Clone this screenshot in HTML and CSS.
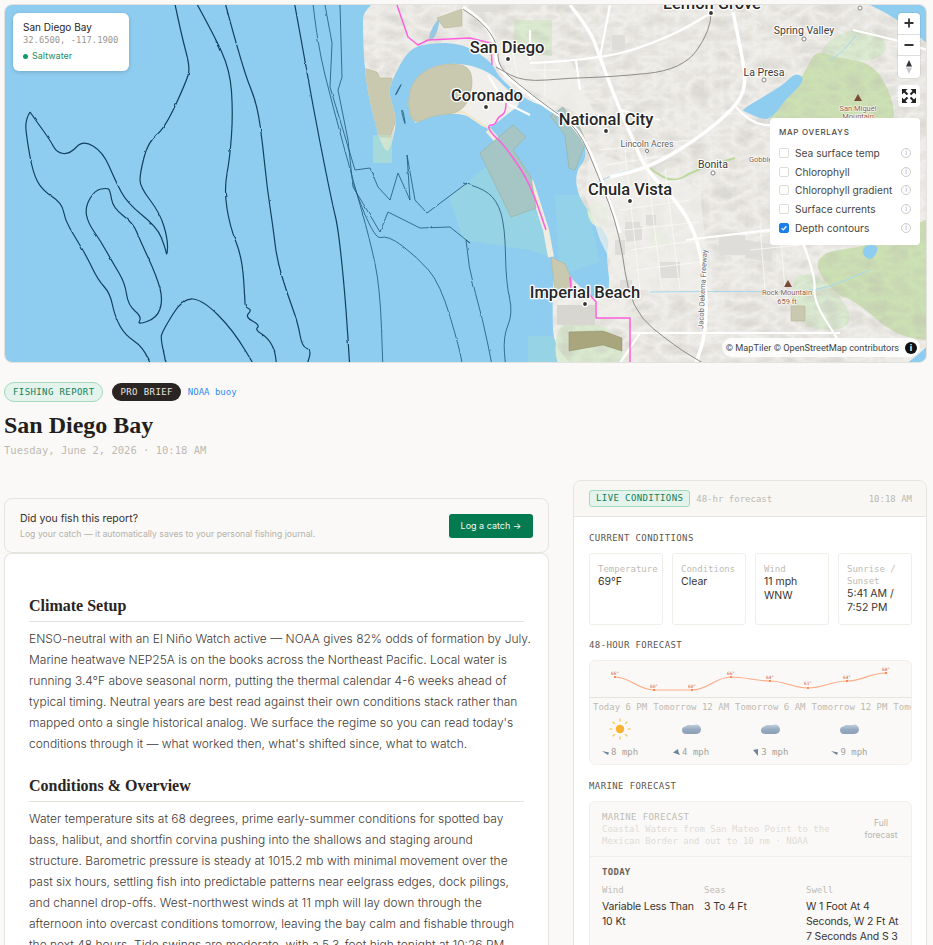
FILE: index.html
```html
<!DOCTYPE html>
<html lang="en">
<head>
    <meta charset="UTF-8">
    <meta name="viewport" content="width=device-width, initial-scale=1.0">
    <title>San Diego Bay - Fishing Report</title>
    <link rel="stylesheet" href="styles.css">
</head>
<body>
<div class="page">

    <!-- map -->
    <div class="map">
        <svg class="map-art" viewBox="5 5 921 357" preserveAspectRatio="none">
            <defs>
                <filter id="relief" x="0" y="0" width="100%" height="100%">
                    <feTurbulence type="turbulence" baseFrequency="0.045 0.07" numOctaves="4" seed="11"/>
                    <feColorMatrix type="matrix" values="0 0 0 0 0.50  0 0 0 0 0.48  0 0 0 0 0.44  1.5 0 0 0 -0.12"/>
                </filter>
                <filter id="rough" x="-5%" y="-5%" width="110%" height="110%">
                    <feTurbulence type="fractalNoise" baseFrequency="0.09" numOctaves="2" seed="3" result="n"/>
                    <feDisplacementMap in="SourceGraphic" in2="n" scale="2" xChannelSelector="R" yChannelSelector="G"/>
                </filter>
                <clipPath id="landclip">
                    <path class="smooth" d="M363,-30 L363,70 L377,133 L387,155 L393,140 L397,118 L388,93 L393,78 L408,50 L427,43 L463,43 L493,63 L498,77 L530,103 L553,107 L580,128 L588,157 L575,172 L578,197 L596,220 L610,240 L606,253 L611,293 L596,302 L570,277 L551,257 L555,400 L980,400 L980,-30 Z"/>
                </clipPath>
            </defs>

            <rect class="water" x="0" y="0" width="933" height="370"/>

            <!-- teal protected areas -->
            <path class="teal" d="M449,197 L493,161 L540,217 L551,257 L530,250 L463,240 Z"/>
            <path class="teal" d="M528,336 L556,336 L556,363 L528,363 Z"/>
            <path class="teal-soft" d="M555,195 L585,195 L600,262 L560,275 Z"/>

            <!-- land -->
            <path class="land smooth" d="M363,-30 L363,70 L377,133 L387,155 L393,140 L397,118 L388,93 L393,78 L408,50 L427,43 L463,43 L493,63 L498,77 L530,103 L553,107 L580,128 L588,157 L575,172 L578,197 L596,220 L610,240 L606,253 L611,293 L596,302 L570,277 L551,257 L555,400 L980,400 L980,-30 Z"/>
            <path class="land smooth" d="M413,125 L407,103 L413,80 L433,65 L463,63 L490,72 L506,88 L523,103 L506,115 L488,130 L476,122 L463,113 L433,115 Z"/>
            <path class="strand" d="M488,130 L506,150 L531,183 L546,230 L551,257"/>
            <path class="beach" d="M415,122 L433,114 L463,112 L488,128 L530,181 L545,228"/>
            <path class="water smooth" d="M428,40 L432,27 L440,17 L438,30 L433,40 Z"/>

            <!-- parks, forest -->
            <path class="forest smooth" d="M790,95 L806,70 L816,50 L836,57 L873,63 L893,97 L895,130 L765,130 L775,108 Z"/>
            <path class="forest-pale smooth" d="M816,50 L856,24 L893,44 L873,63 L836,57 Z"/>
            <path class="forest smooth" d="M960,200 L880,245 L810,253 L830,293 L855,300 L900,340 L960,340 Z"/>
            <path class="forest-pale smooth" d="M790,270 L830,280 L860,330 L795,330 Z"/>
            <path class="forest-pale" d="M514,20 L552,20 L552,56 L514,56 Z"/>
            <path class="forest-pale" d="M651,230 L668,233 L670,247 L650,246 Z"/>
            <path class="forest-pale smooth" d="M555,320 L600,322 L625,345 L620,380 L556,380 Z"/>
            <path class="forest-pale smooth" d="M585,205 L603,200 L610,225 L592,228 Z"/>

            <!-- hill shading -->
            <g clip-path="url(#landclip)">
                <rect filter="url(#relief)" class="relief" x="363" y="4" width="564" height="360"/>
            </g>

            <!-- flat town areas have no shading -->
            <path class="flat" d="M496,45 L570,60 L600,125 L560,105 L510,80 Z"/>
            <path class="flat" d="M590,150 L700,190 L710,290 L625,290 L600,240 L585,195 Z"/>
            <path class="flat" d="M557,300 L625,300 L625,318 L557,318 Z"/>
            <path class="flat" d="M470,70 L520,100 L500,118 L475,118 Z"/>

            <!-- urban blocks -->
            <path class="block" d="M470,5 L500,5 L500,12 L470,12 Z M612,35 L625,35 L625,50 L612,50 Z M625,222 L640,222 L640,236 L625,236 Z M615,240 L625,240 L625,255 L615,255 Z M626,228 L642,226 L642,240 L626,242 Z M660,262 L680,262 L680,278 L660,278 Z M719,232 L745,232 L745,255 L719,255 Z M745,240 L772,244 L772,262 L745,258 Z M646,215 L656,215 L656,225 L646,225 Z M620,280 L632,280 L632,292 L620,292 Z"/>
            <path class="block-dark" d="M557,305 L595,305 L595,325 L557,325 Z"/>

            <!-- olive military land -->
            <path class="olive smooth" d="M413,125 L407,103 L413,80 L433,65 L468,63 L474,85 L463,113 L433,115 Z"/>
            <g clip-path="url(#landclip)">
                <path class="olive" d="M363,68 L377,72 L380,78 L392,78 L397,118 L390,137 L380,137 L370,107 Z"/>
            </g>
            <path class="olive" d="M437,18 L462,9 L462,26 L444,28 Z"/>
            <path class="olive-water" d="M480,153 L513,125 L526,137 L513,150 L531,177 L536,208 L511,217 Z"/>
            <path class="olive-water" d="M550,116 L563,107 L580,128 L586,142 L575,170 L569,168 L565,135 Z"/>
            <path class="olive" d="M551,257 L565,264 L572,280 L570,292 L555,292 Z"/>
            <path class="olive-dark" d="M569,332 L603,331 L622,338 L622,351 L603,345 L569,351 Z"/>
            <path class="olive" d="M791,306 L805,306 L805,321 L791,321 Z"/>
            <rect class="tip" x="373" y="135" width="19" height="28"/>

            <!-- reservoirs, rivers -->
            <path class="water smooth" d="M741,110 L763,97 L783,85 L796,72 L806,80 L785,100 L773,117 L763,120 L746,112 Z"/>
            <path class="water smooth" d="M863,245 L880,245 L873,260 L863,257 Z"/>
            <path class="river smooth" d="M593,185 L610,175 L640,168 M650,292 L745,291 L815,293 L870,270 M856,35 L845,50 L830,60"/>
            <path class="creek smooth" d="M650,168 L670,185 L695,170 L735,158"/>

            <!-- roads -->
            <path class="road-big smooth" d="M463,7 L483,20 L496,43 L496,67 L520,87 L546,107 L578,127 L598,170 L620,233"/>
            <path class="road-big smooth" d="M570,5 L590,30 L600,57 L613,93 L633,140 L646,170 L676,200 L696,233 L706,283 L706,333 L696,363"/>
            <path class="road-big smooth" d="M733,12 L743,60 L746,85 L736,107 L696,140 L650,167 L610,177"/>
            <path class="road smooth" d="M530,63 L603,60 L670,37 L711,13"/>
            <path class="road smooth" d="M736,107 L753,127 L790,123"/>
            <path class="road smooth" d="M803,243 L816,277 L813,300 L840,343"/>
            <path class="road" d="M630,333 L840,333"/>
            <path class="road smooth" d="M853,30 L897,40 L927,50"/>
            <path class="road" d="M610,5 L600,57 M530,30 L530,60 M576,60 L580,90 M620,110 L660,120 M686,240 L770,230 M640,333 L620,363 M506,103 L530,115 M488,75 L500,95"/>
            <path class="street" d="M600,150 L690,140 M605,165 L670,155 M612,190 L680,180 M620,210 L690,200 M625,230 L700,222 M630,250 L700,240 M635,270 L700,262 M625,150 L640,290 M645,150 L662,290 M665,170 L680,290 M740,235 L800,228 M750,250 L800,245 M760,225 L765,290 M780,225 L785,290 M510,40 L520,85 M530,70 L560,70 M545,60 L545,95"/>

            <!-- rail -->
            <path class="rail smooth" d="M463,9 L483,22 L498,45 L498,67 L522,87 L548,107 L578,128 L598,175 L620,233 L630,310 L676,347 L703,363"/>
            <path class="rail smooth" d="M711,13 L711,30 L683,70 L610,77 L570,78 L523,82 L496,67"/>

            <!-- county line -->
            <path class="pink" d="M397,5 L408,37 L418,45 L428,40 L470,38 L486,42 L491,43 L492,65"/>
            <path class="pink smooth" d="M506,103 L506,113 L498,117 L495,125 L488,125 L490,132 L506,147 L530,183 L546,230"/>
            <path class="pink" d="M570,277 L571,288 M590,295 L596,302 L596,318 L630,318 L630,363"/>

            <!-- depth contours -->
            <g filter="url(#rough)">
                <path class="contour smooth" d="M30,112 L25,120 L27,140 L33,173 L42,190 L62,203 L65,220 L75,237 L87,257 L98,280 L110,293 L115,317 L125,335 L143,347 L153,370"/>
                <path class="contour smooth" d="M30,112 L37,122 L50,140 L57,153 L70,154 L83,140 L103,152 L115,180 L127,203 L157,227 L165,247 L167,257 L168,240 L160,213 L140,187 L140,173 L148,142 L165,128 L187,80 L190,67 L182,37 L173,-5"/>
                <path class="contour smooth" d="M107,188 L95,190 L85,207 L88,223 L100,240 L113,263 L125,283 L128,305 L142,317 L137,325 L157,318 L163,300 L157,277 L140,240 L133,223 L113,208 L110,190 Z"/>
                <path class="contour smooth" d="M192,-5 L213,33 L230,70 L233,113 L230,157 L224,190 L230,227 L242,257 L245,300 L245,307 L252,310 L245,317 L260,325 L255,330 L267,337 L275,350 L277,370"/>
                <path class="contour smooth" d="M223,-5 L243,70 L257,103 L263,147 L267,187 L273,227 L277,260 L287,293 L298,323 L302,347 L312,350 L305,370"/>
                <path class="contour smooth" d="M168,370 L160,340 L163,330 L183,298 L203,300 L233,330 L257,370"/>
                <path class="contour smooth" d="M293,-5 L307,73 L320,143 L333,207 L338,227 L345,293 L350,370"/>
                <path class="contour-thin smooth" d="M312,-5 L317,43 L333,107 L353,180 L370,240 L380,287 L383,370"/>
                <path class="contour-thin" d="M325,5 L332,43 L330,87 L343,130 L355,170 L370,168 L378,187 L390,200 L398,173 L410,200 L407,155 L415,200 L427,213 L467,183"/>
                <path class="contour-thin" d="M340,5 L342,77 L338,90 L348,140 L353,187 L367,210 L380,232 L388,212 L420,228 L450,227 L470,243 L466,240"/>
                <path class="contour-thin smooth" d="M353,183 L373,240 L388,235 L417,257 L440,283 L460,350 L463,370"/>
                <path class="contour-thin smooth" d="M463,183 L480,187 L497,200 L505,227 L506,283 L513,313 L503,337 L506,370"/>
                <path class="contour-thin smooth" d="M466,240 L468,267 L483,320 L493,370"/>
                <path class="contour-thin smooth" d="M395,95 L403,81 L396,95 Z M403,110 L406,128 L401,110 Z"/>
            </g>

            <!-- labels -->
            <text class="lbl lbl-big" x="507" y="53" text-anchor="middle">San Diego</text>
            <text class="lbl lbl-big" x="487" y="101" text-anchor="middle">Coronado</text>
            <text class="lbl lbl-big" x="606" y="125" text-anchor="middle">National City</text>
            <text class="lbl lbl-big" x="630" y="195" text-anchor="middle">Chula Vista</text>
            <text class="lbl lbl-big" x="585" y="298" text-anchor="middle">Imperial Beach</text>
            <text class="lbl lbl-big" x="712" y="9" text-anchor="middle">Lemon Grove</text>
            <text class="lbl lbl-mid" x="804" y="34" text-anchor="middle">Spring Valley</text>
            <text class="lbl lbl-mid" x="764" y="76" text-anchor="middle">La Presa</text>
            <text class="lbl lbl-mid" x="713" y="168" text-anchor="middle">Bonita</text>
            <text class="lbl lbl-sm" x="647" y="147" text-anchor="middle">Lincoln Acres</text>
            <text class="lbl lbl-brown" x="858" y="111" text-anchor="middle">San Miguel</text>
            <text class="lbl lbl-brown" x="858" y="119" text-anchor="middle">Mountain</text>
            <text class="lbl lbl-brown" x="787" y="295" text-anchor="middle">Rock Mountain</text>
            <text class="lbl lbl-brown" x="787" y="304" text-anchor="middle">659 ft</text>
            <text class="lbl lbl-brown" x="762" y="162" text-anchor="middle">Gobbler</text>
            <text class="lbl lbl-road" transform="translate(703,329) rotate(-87)">Jacob Dekema Freeway</text>

            <!-- city dots -->
            <g class="dots">
                <circle cx="508" cy="59" r="2.600"/><circle cx="486" cy="107" r="2.600"/>
                <circle cx="606" cy="131" r="2.600"/><circle cx="630" cy="201" r="2.600"/>
                <circle cx="585" cy="304" r="2.600"/><circle cx="711" cy="13" r="2.600"/>
            </g>
            <g class="dots-hollow">
                <circle cx="804" cy="39" r="2"/><circle cx="764" cy="80" r="2"/>
                <circle cx="713" cy="173" r="2"/><circle cx="647" cy="151" r="1.600"/>
                <circle cx="860" cy="8" r="2"/>
            </g>
            <path class="peak" d="M858,94 L862,101 L854,101 Z M788,280 L792,287 L784,287 Z"/>
        </svg>

        <div class="spot-card">
            <div class="spot-name">San Diego Bay</div>
            <div class="spot-coords">32.6500, -117.1900</div>
            <div class="spot-type"><span class="spot-dot"></span>Saltwater</div>
        </div>

        <div class="map-ctrls">
            <div class="ctrl-btn">
                <svg width="12" height="12" viewBox="0 0 12 12"><path class="ctrl-ic" d="M6 1.500v9M1.500 6h9"/></svg>
            </div>
            <div class="ctrl-btn">
                <svg width="12" height="12" viewBox="0 0 12 12"><path class="ctrl-ic" d="M1.500 6h9"/></svg>
            </div>
            <div class="ctrl-btn">
                <svg width="10" height="16" viewBox="0 0 10 16"><path class="needle-up" d="M5 1l3 6.500H2z"/><path class="needle-down" d="M5 15L2 8.500h6z"/></svg>
            </div>
        </div>
        <div class="ctrl-full">
            <svg width="16" height="16" viewBox="0 0 16 16">
                <path class="full-tri" d="M1 1h5.500L1 6.500zM15 1v5.500L9.500 1zM1 15V9.500L6.500 15zM15 15H9.500L15 9.500z"/>
                <path class="full-arm" d="M3 3l3.500 3.500M13 3L9.500 6.500M3 13l3.500-3.500M13 13L9.500 9.500"/>
            </svg>
        </div>

        <div class="overlays">
            <div class="overlays-title">MAP OVERLAYS</div>
            <div class="ov-row"><span class="ov-check"></span><span class="ov-name">Sea surface temp</span><span class="ov-info">i</span></div>
            <div class="ov-row"><span class="ov-check"></span><span class="ov-name">Chlorophyll</span><span class="ov-info">i</span></div>
            <div class="ov-row"><span class="ov-check"></span><span class="ov-name">Chlorophyll gradient</span><span class="ov-info">i</span></div>
            <div class="ov-row"><span class="ov-check"></span><span class="ov-name">Surface currents</span><span class="ov-info">i</span></div>
            <div class="ov-row">
                <span class="ov-check on"><svg width="10" height="10" viewBox="0 0 10 10"><path class="tick" d="M2 5.200l2.100 2.100L8 2.800"/></svg></span>
                <span class="ov-name">Depth contours</span><span class="ov-info">i</span>
            </div>
        </div>

        <div class="attrib">
            <span>© MapTiler © OpenStreetMap contributors</span>
            <span class="attrib-i">i</span>
        </div>
    </div>

    <!-- heading -->
    <div class="tags">
        <span class="tag tag-green">FISHING REPORT</span>
        <span class="tag tag-dark">PRO BRIEF</span>
        <span class="tag-link">NOAA buoy</span>
    </div>
    <h1>San Diego Bay</h1>
    <div class="date">Tuesday, June 2, 2026 · 10:18 AM</div>

    <div class="columns">
        <div class="col-left">
            <div class="catch">
                <div>
                    <div class="catch-title">Did you fish this report?</div>
                    <div class="catch-sub">Log your catch — it automatically saves to your personal fishing journal.</div>
                </div>
                <div class="catch-btn">Log a catch →</div>
            </div>

            <div class="report">
                <h2>Climate Setup</h2>
                <p>ENSO-neutral with an El Niño Watch active — NOAA gives 82% odds of formation by July.<br>
                Marine heatwave NEP25A is on the books across the Northeast Pacific. Local water is<br>
                running 3.4°F above seasonal norm, putting the thermal calendar 4-6 weeks ahead of<br>
                typical timing. Neutral years are best read against their own conditions stack rather than<br>
                mapped onto a single historical analog. We surface the regime so you can read today's<br>
                conditions through it — what worked then, what's shifted since, what to watch.</p>

                <h2>Conditions &amp; Overview</h2>
                <p>Water temperature sits at 68 degrees, prime early-summer conditions for spotted bay<br>
                bass, halibut, and shortfin corvina pushing into the shallows and staging around<br>
                structure. Barometric pressure is steady at 1015.2 mb with minimal movement over the<br>
                past six hours, settling fish into predictable patterns near eelgrass edges, dock pilings,<br>
                and channel drop-offs. West-northwest winds at 11 mph will lay down through the<br>
                afternoon into overcast conditions tomorrow, leaving the bay calm and fishable through<br>
                the next 48 hours. Tide swings are moderate, with a 5.3-foot high tonight at 10:26 PM</p>
            </div>
        </div>

        <div class="col-right">
            <div class="live-head">
                <span class="live-tag">LIVE CONDITIONS</span>
                <span class="live-sub">48-hr forecast</span>
                <span class="live-time">10:18 AM</span>
            </div>
            <div class="live-body">
                <div class="sec-title">CURRENT CONDITIONS</div>
                <div class="tiles">
                    <div class="tile"><div class="tile-lbl">Temperature</div><div class="tile-val">69°F</div></div>
                    <div class="tile"><div class="tile-lbl">Conditions</div><div class="tile-val">Clear</div></div>
                    <div class="tile"><div class="tile-lbl">Wind</div><div class="tile-val">11 mph WNW</div></div>
                    <div class="tile"><div class="tile-lbl">Sunrise / Sunset</div><div class="tile-val">5:41 AM / 7:52 PM</div></div>
                </div>

                <div class="sec-title sec-gap">48-HOUR FORECAST</div>
                <div class="fc-box">
                    <svg class="fc-chart" width="323" height="37" viewBox="589 660 323 37">
                        <path class="fc-line" d="M615,677 C630,677 638,690 654,690 L692,690 C708,690 715,677 731,677 C746,677 755,681 770,681 C785,681 793,688 808,688 C823,688 832,681 847,681 C862,681 870,673 886,673"/>
                        <g class="fc-dots">
                            <rect x="614" y="676" width="2" height="2"/><rect x="653" y="689" width="2" height="2"/>
                            <rect x="691" y="689" width="2" height="2"/><rect x="730" y="676" width="2" height="2"/>
                            <rect x="769" y="680" width="2" height="2"/><rect x="807" y="687" width="2" height="2"/>
                            <rect x="846" y="680" width="2" height="2"/><rect x="885" y="672" width="2" height="2"/>
                        </g>
                        <g class="fc-temps" text-anchor="middle">
                            <text x="615" y="675">66°</text><text x="654" y="688">60°</text>
                            <text x="692" y="688">60°</text><text x="731" y="675">66°</text>
                            <text x="770" y="679">64°</text><text x="808" y="685">61°</text>
                            <text x="847" y="679">64°</text><text x="886" y="671">68°</text>
                        </g>
                    </svg>
                    <div class="hours">
                        <div class="hour">
                            <div class="hour-lbl">Today 6 PM</div>
                            <svg class="hour-ic" width="24" height="24" viewBox="0 0 24 24">
                                <circle class="sun" cx="12" cy="12" r="4.200"/>
                                <path class="rays" d="M12 1.500v3M12 19.500v3M1.500 12h3M19.500 12h3M4.600 4.600l2.200 2.200M17.200 17.200l2.200 2.200M4.600 19.400l2.200-2.200M17.200 6.800l2.200-2.200"/>
                            </svg>
                            <div class="hour-wind"><svg width="7" height="7" viewBox="0 0 7 7"><path class="wind-ic" d="M0 2l7 1.500-1 2.500z"/></svg>8 mph</div>
                        </div>
                        <div class="hour">
                            <div class="hour-lbl">Tomorrow 12 AM</div>
                            <svg class="hour-ic" width="24" height="24" viewBox="0 0 24 24"><use href="#cloud"/></svg>
                            <div class="hour-wind"><svg width="7" height="7" viewBox="0 0 7 7"><path class="wind-ic" d="M0 3.500L5 0l.500 3 1.500 3z"/></svg>4 mph</div>
                        </div>
                        <div class="hour">
                            <div class="hour-lbl">Tomorrow 6 AM</div>
                            <svg class="hour-ic" width="24" height="24" viewBox="0 0 24 24"><use href="#cloud"/></svg>
                            <div class="hour-wind"><svg width="7" height="7" viewBox="0 0 7 7"><path class="wind-ic" d="M1 1l5-1v7z"/></svg>3 mph</div>
                        </div>
                        <div class="hour">
                            <div class="hour-lbl">Tomorrow 12 PM</div>
                            <svg class="hour-ic" width="24" height="24" viewBox="0 0 24 24"><use href="#cloud"/></svg>
                            <div class="hour-wind"><svg width="7" height="7" viewBox="0 0 7 7"><path class="wind-ic" d="M0 2l7 1.500-1 2.500z"/></svg>9 mph</div>
                        </div>
                        <div class="hour">
                            <div class="hour-lbl">Tomorrow 6 PM</div>
                        </div>
                    </div>
                </div>

                <div class="sec-title sec-gap">MARINE FORECAST</div>
                <div class="marine">
                    <div class="marine-head">
                        <div>
                            <div class="marine-title">MARINE FORECAST</div>
                            <div class="marine-sub">Coastal Waters from San Mateo Point to the Mexican Border and out to 10 nm · NOAA</div>
                        </div>
                        <div class="marine-link">Full forecast</div>
                    </div>
                    <div class="marine-body">
                        <div class="marine-day">TODAY</div>
                        <div class="marine-grid">
                            <div><div class="marine-lbl">Wind</div><div class="marine-val">Variable Less Than<br>10 Kt</div></div>
                            <div><div class="marine-lbl">Seas</div><div class="marine-val">3 To 4 Ft</div></div>
                            <div><div class="marine-lbl">Swell</div><div class="marine-val">W 1 Foot At 4<br>Seconds, W 2 Ft At<br>7 Seconds And S 3</div></div>
                        </div>
                    </div>
                </div>
            </div>
        </div>
    </div>
</div>

<svg class="defs" width="0" height="0">
    <defs>
        <linearGradient id="cloudfill" x1="0" y1="0" x2="0" y2="1">
            <stop offset="0" stop-color="#c3d0dc"/>
            <stop offset="0.5" stop-color="#98abc0"/>
            <stop offset="1" stop-color="#8a9fb6"/>
        </linearGradient>
        <g id="cloud">
            <path fill="url(#cloudfill)" d="M7 17c-2.500 0-4-1.700-4-3.800 0-2 1.500-3.500 3.400-3.600.8-1 2-1.600 3.400-1.600h5.700c1.200-.6 2.600-.6 3.700 0 1.700.8 2.800 2.600 2.800 4.600 0 2.500-2 4.400-4.600 4.400z"/>
        </g>
    </defs>
</svg>
<script src="map.js"></script>
</body>
</html>
```

FILE: map.js
```js
// turn the traced polylines of the map into soft curves
function midpoint(a, b) {
    return ((a[0] + b[0]) / 2) + "," + ((a[1] + b[1]) / 2);
}

function smoothPart(part) {
    const closed = /z/i.test(part);
    const nums = part.match(/-?\d+(\.\d+)?/g).map(Number);
    const pts = [];
    for (let i = 0; i < nums.length; i += 2) {
        pts.push([nums[i], nums[i + 1]]);
    }

    let d = "";
    if (closed) {
        d = "M" + midpoint(pts[pts.length - 1], pts[0]);
        for (let i = 0; i < pts.length; i++) {
            d += " Q" + pts[i][0] + "," + pts[i][1] + " " + midpoint(pts[i], pts[(i + 1) % pts.length]);
        }
        return d + " Z";
    }

    d = "M" + pts[0][0] + "," + pts[0][1];
    for (let i = 1; i < pts.length - 1; i++) {
        d += " Q" + pts[i][0] + "," + pts[i][1] + " " + midpoint(pts[i], pts[i + 1]);
    }
    const last = pts[pts.length - 1];
    return d + " L" + last[0] + "," + last[1];
}

document.querySelectorAll("path.smooth").forEach(function (el) {
    const parts = el.getAttribute("d").split("M").filter(function (s) { return s.trim() != ""; });
    el.setAttribute("d", parts.map(smoothPart).join(" "));
});
```

FILE: styles.css
```css
html, body {
    margin: 0;
    padding: 0;
    height: 945px;
    overflow: hidden;
    background: #faf9f7;
}

.page {
    height: 945px;
    overflow: hidden;
    padding: 4px 6px 0 4px;
    box-sizing: border-box;
    font-family: "Inter", "Liberation Sans", sans-serif;
    color: #2a2522;
}

.defs {
    position: absolute;
}

/* map */
.map {
    position: relative;
    height: 359px;
    border: 1px solid #e4e2dd;
    border-radius: 8px;
    overflow: hidden;
    box-sizing: border-box;
}

.map-art {
    display: block;
    width: 100%;
    height: 100%;
}

.water { fill: #8ecdf0; }
.teal { fill: #95d3e5; }
.teal-soft { fill: #93d2e8; }
.land { fill: #f1efeb; }
.strand { fill: none; stroke: #efece2; stroke-width: 6; }
.beach { fill: none; stroke: #f1e6c8; stroke-width: 2; }
.forest { fill: #cde2b4; }
.forest-pale { fill: #dcecd2; }
.relief { opacity: 0.4; }
.flat { fill: #f1efeb; opacity: 0.7; }
.block { fill: #dfddd9; }
.block-dark { fill: #d8d6d1; }
.olive { fill: #c9c9b0; stroke: #b5b08c; stroke-width: 0.5; }
.olive-dark { fill: #a9a67e; stroke: #8f8b62; stroke-width: 0.5; }
.olive-water { fill: #a6c6c6; stroke: #a3ab90; stroke-width: 0.6; }
.tip { fill: #b9e3c8; opacity: 0.55; }
.river { fill: none; stroke: #a5d8ee; stroke-width: 1; }
.creek { fill: none; stroke: #bcd9a0; stroke-width: 2; }
.road-big { fill: none; stroke: #fff; stroke-width: 3.500; stroke-linejoin: round; }
.road { fill: none; stroke: #fff; stroke-width: 2.200; stroke-linejoin: round; }
.street { fill: none; stroke: #fbfaf8; stroke-width: 0.8; }
.rail { fill: none; stroke: #8f8d89; stroke-width: 1; }
.pink { fill: none; stroke: #ff5fdc; stroke-width: 1.500; stroke-linejoin: round; }
.contour { fill: none; stroke: #12405f; stroke-width: 1.200; stroke-linejoin: round; }
.contour-thin { fill: none; stroke: #1d5676; stroke-width: 0.8; stroke-linejoin: round; }

.lbl {
    font-family: "Roboto", "Liberation Sans", sans-serif;
    paint-order: stroke;
    stroke: #fff;
    stroke-linejoin: round;
}
.lbl-big { font-size: 16.500px; font-weight: 500; fill: #262626; stroke-width: 2.500px; }
.lbl-mid { font-size: 10.500px; fill: #3a3a3a; stroke-width: 2px; }
.lbl-sm { font-size: 8.800px; fill: #5c5c5c; stroke-width: 1.500px; }
.lbl-brown { font-size: 7.500px; fill: #8a5a48; stroke-width: 1.200px; }
.lbl-road { font-size: 7.500px; fill: #666; stroke-width: 1.500px; }
.dots circle { fill: #333; stroke: #fff; stroke-width: 1.400; }
.dots-hollow circle { fill: #fff; stroke: #777; stroke-width: 0.9; }
.peak { fill: #7a4a34; }

/* map overlay cards */
.spot-card {
    position: absolute;
    left: 8px;
    top: 8px;
    width: 116px;
    height: 58px;
    box-sizing: border-box;
    padding: 8px 10px;
    background: #fff;
    border-radius: 6px;
    box-shadow: 0 1px 4px rgba(0, 0, 0, 0.18);
}

.spot-name {
    font-size: 10px;
    line-height: 13px;
    color: #2a2522;
}

.spot-coords {
    font-family: "DejaVu Sans Mono", monospace;
    font-size: 8.800px;
    line-height: 13px;
    color: #9a958d;
}

.spot-type {
    display: flex;
    align-items: center;
    gap: 4px;
    margin-top: 3px;
    font-size: 9px;
    line-height: 12px;
    color: #1d8a63;
}

.spot-dot {
    width: 5px;
    height: 5px;
    border-radius: 50%;
    background: #0f9a6b;
}

.map-ctrls {
    position: absolute;
    right: 6px;
    top: 8px;
    width: 22px;
    background: #fff;
    border-radius: 4px;
    box-shadow: 0 0 0 1px rgba(0, 0, 0, 0.06);
}

.ctrl-btn {
    height: 21.500px;
    display: flex;
    align-items: center;
    justify-content: center;
    border-bottom: 1px solid #ddd;
    box-sizing: border-box;
}

.ctrl-btn:last-child {
    border-bottom: none;
}

.ctrl-ic { fill: none; stroke: #333; stroke-width: 1.800; }
.needle-up { fill: #333; }
.needle-down { fill: #c8c8c8; }

.ctrl-full {
    position: absolute;
    right: 6px;
    top: 80px;
    width: 22px;
    height: 22px;
    display: flex;
    align-items: center;
    justify-content: center;
    background: #fff;
    border-radius: 4px;
}

.full-tri { fill: #222; }
.full-arm { fill: none; stroke: #222; stroke-width: 2; }

.overlays {
    position: absolute;
    right: 6px;
    top: 113px;
    width: 150px;
    height: 127px;
    box-sizing: border-box;
    padding: 9px 9px;
    background: #fff;
    border-radius: 4px;
}

.overlays-title {
    font-size: 8px;
    font-weight: 500;
    letter-spacing: 0.7px;
    line-height: 11px;
    margin-bottom: 6px;
    color: #4e4944;
}

.ov-row {
    display: flex;
    align-items: center;
    height: 18.600px;
    gap: 6px;
}

.ov-check {
    width: 10px;
    height: 10px;
    box-sizing: border-box;
    border: 1px solid #dedcd7;
    border-radius: 2px;
    flex: none;
    display: flex;
    align-items: center;
    justify-content: center;
}

.ov-check.on {
    background: #1a7fea;
    border-color: #1a7fea;
}

.tick { fill: none; stroke: #fff; stroke-width: 1.500; }

.ov-name {
    flex: 1;
    font-size: 10.200px;
    white-space: nowrap;
    color: #4a4540;
}

.ov-info {
    width: 10px;
    height: 10px;
    flex: none;
    box-sizing: border-box;
    border: 1px solid #cfccc6;
    border-radius: 50%;
    font-size: 7px;
    line-height: 8px;
    text-align: center;
    color: #b0ada6;
}

.attrib {
    position: absolute;
    right: 6px;
    bottom: 5px;
    display: flex;
    align-items: center;
    gap: 6px;
    height: 19px;
    padding: 0 3px 0 4px;
    border-radius: 10px;
    background: rgba(255, 255, 255, 0.85);
    font-family: "Roboto", "Liberation Sans", sans-serif;
    font-size: 9.200px;
    color: #444;
}

.attrib-i {
    width: 12px;
    height: 12px;
    border-radius: 50%;
    background: #111;
    color: #fff;
    font-size: 9px;
    font-weight: 700;
    line-height: 12px;
    text-align: center;
}

/* heading */
.tags {
    display: flex;
    align-items: center;
    gap: 9px;
    margin-top: 19px;
    height: 20px;
}

.tag {
    font-family: "DejaVu Sans Mono", monospace;
    font-size: 9px;
    letter-spacing: 0.4px;
    border-radius: 10px;
    box-sizing: border-box;
    padding: 0 8px;
}

.tag-green {
    height: 20px;
    line-height: 18px;
    background: #e4f3ec;
    border: 1px solid #a3d9bf;
    color: #12805a;
}

.tag-dark {
    height: 18px;
    line-height: 18px;
    background: #2a2522;
    color: #e8e5e0;
}

.tag-link {
    margin-left: -2px;
    font-family: "DejaVu Sans Mono", monospace;
    font-size: 9px;
    color: #2f8cf0;
}

h1 {
    margin: 8px 0 0;
    font-family: "Liberation Serif", serif;
    font-size: 24px;
    font-weight: 700;
    line-height: 30px;
    color: #231f1c;
}

.date {
    margin-top: 3px;
    font-family: "DejaVu Sans Mono", monospace;
    font-size: 10.500px;
    line-height: 14px;
    color: #bdb9b2;
}

/* two columns */
.columns {
    display: grid;
    grid-template-columns: 545px 354px;
    gap: 24px;
    margin-top: 23px;
    align-items: start;
}

.col-left {
    padding-top: 18px;
}

.catch {
    display: flex;
    align-items: center;
    justify-content: space-between;
    height: 55px;
    box-sizing: border-box;
    padding: 0 15px;
    background: #faf9f7;
    border: 1px solid #e6e4df;
    border-radius: 8px;
}

.catch-title {
    font-size: 10.500px;
    line-height: 14px;
    color: #34302c;
}

.catch-sub {
    margin-top: 2px;
    font-size: 8.700px;
    line-height: 12px;
    color: #b5b1aa;
}

.catch-btn {
    width: 84px;
    height: 24px;
    border-radius: 3px;
    background: #047a50;
    color: #f2f7f4;
    font-size: 9px;
    line-height: 24px;
    text-align: center;
}

.report {
    padding: 40px 24px 0 24px;
    background: #fff;
    border: 1px solid #e6e4df;
    border-bottom: none;
    border-radius: 8px 8px 0 0;
    height: 420px;
    box-sizing: border-box;
}

h2 {
    margin: 0 0 6px;
    padding-bottom: 3px;
    font-family: "Liberation Serif", serif;
    font-size: 16px;
    font-weight: 700;
    line-height: 24px;
    border-bottom: 1px solid #e4e2dd;
    color: #2a2522;
}

.report p {
    margin: 0 0 20px;
    font-size: 12px;
    font-weight: 300;
    line-height: 21px;
    color: #3f3a36;
    white-space: nowrap;
}

/* right column */
.col-right {
    background: #fff;
    border: 1px solid #e6e4df;
    border-radius: 8px 8px 0 0;
    height: 470px;
    overflow: hidden;
}

.live-head {
    display: flex;
    align-items: center;
    gap: 6px;
    height: 35px;
    padding: 0 14px 0 15px;
    background: #f8f7f4;
    border-bottom: 1px solid #e6e4df;
    font-family: "DejaVu Sans Mono", monospace;
    font-size: 9px;
}

.live-tag {
    padding: 0 6px;
    height: 17px;
    line-height: 15px;
    box-sizing: border-box;
    background: #e4f3ec;
    border: 1px solid #a3d9bf;
    border-radius: 3px;
    color: #12805a;
    letter-spacing: 0.4px;
}

.live-sub {
    flex: 1;
    color: #bdb9b2;
}

.live-time {
    color: #bdb9b2;
}

.live-body {
    padding: 15px 14px 0 15px;
}

.sec-title {
    font-family: "DejaVu Sans Mono", monospace;
    font-size: 9px;
    letter-spacing: 0.4px;
    line-height: 12px;
    margin-bottom: 9px;
    color: #5c5650;
}

.sec-gap {
    margin-top: 15px;
}

.tiles {
    display: grid;
    grid-template-columns: repeat(4, 74px);
    gap: 9px;
    height: 71px;
}

.tile {
    box-sizing: border-box;
    padding: 9px 8px;
    border: 1px solid #f0eee9;
    border-radius: 3px;
}

.tile-lbl {
    font-family: "DejaVu Sans Mono", monospace;
    font-size: 9px;
    line-height: 12px;
    color: #c0bcb5;
}

.tile-val {
    font-size: 10.500px;
    line-height: 14px;
    color: #3a3530;
}

.fc-box {
    height: 105px;
    background: #faf9f7;
    border: 1px solid #f2f0ec;
    border-radius: 6px;
    box-sizing: border-box;
    overflow: hidden;
}

.fc-chart {
    display: block;
    margin: -1px;
    height: 37px;
    border-bottom: 1px solid #e6e4df;
}

.fc-line { fill: none; stroke: #ffab85; stroke-width: 1.200; }
.fc-dots rect { fill: #ff8a50; }
.fc-temps text {
    font-family: "DejaVu Sans Mono", monospace;
    font-size: 4.500px;
    fill: #cf5f3a;
}

.hours {
    display: flex;
    gap: 6px;
    padding: 4px 0 0 3px;
    white-space: nowrap;
}

.hour {
    flex: none;
    display: flex;
    flex-direction: column;
    align-items: center;
}

.hour-lbl {
    font-family: "DejaVu Sans Mono", monospace;
    font-size: 9px;
    line-height: 12px;
    color: #bdb9b2;
}

.hour-ic {
    margin-top: 4px;
}

.hour-wind {
    display: flex;
    align-items: center;
    gap: 2px;
    margin-top: 5px;
    font-family: "DejaVu Sans Mono", monospace;
    font-size: 9px;
    line-height: 12px;
    color: #a5a199;
}

.sun { fill: #f9b233; }
.rays { fill: none; stroke: #f9c043; stroke-width: 1.200; }
.wind-ic { fill: #6f8398; }

.marine {
    background: #faf9f7;
    border: 1px solid #f2f0ec;
    border-radius: 6px;
    height: 200px;
}

.marine-head {
    display: flex;
    align-items: center;
    gap: 20px;
    height: 55px;
    box-sizing: border-box;
    padding: 0 12px 0 12px;
    border-bottom: 1px solid #f0eee9;
}

.marine-title {
    font-family: "DejaVu Sans Mono", monospace;
    font-size: 9px;
    line-height: 12px;
    letter-spacing: 0.4px;
    color: #c0bcb5;
}

.marine-sub {
    font-family: "DejaVu Sans Mono", monospace;
    font-size: 9px;
    line-height: 12px;
    color: #dfdcd6;
}

.marine-link {
    flex: none;
    width: 36px;
    text-align: center;
    font-size: 8.500px;
    line-height: 12px;
    color: #b9b5ae;
}

.marine-body {
    padding: 9px 12px;
}

.marine-day {
    font-family: "DejaVu Sans Mono", monospace;
    font-size: 9px;
    font-weight: 700;
    line-height: 12px;
    letter-spacing: 0.3px;
    color: #6b635b;
}

.marine-grid {
    display: grid;
    grid-template-columns: 102px 102px 94px;
    margin-top: 6px;
}

.marine-lbl {
    font-family: "DejaVu Sans Mono", monospace;
    font-size: 9px;
    line-height: 12px;
    margin-bottom: 3px;
    color: #c0bcb5;
}

.marine-val {
    font-size: 10.500px;
    letter-spacing: -0.15px;
    line-height: 15px;
    white-space: nowrap;
    color: #3a3530;
}
```
